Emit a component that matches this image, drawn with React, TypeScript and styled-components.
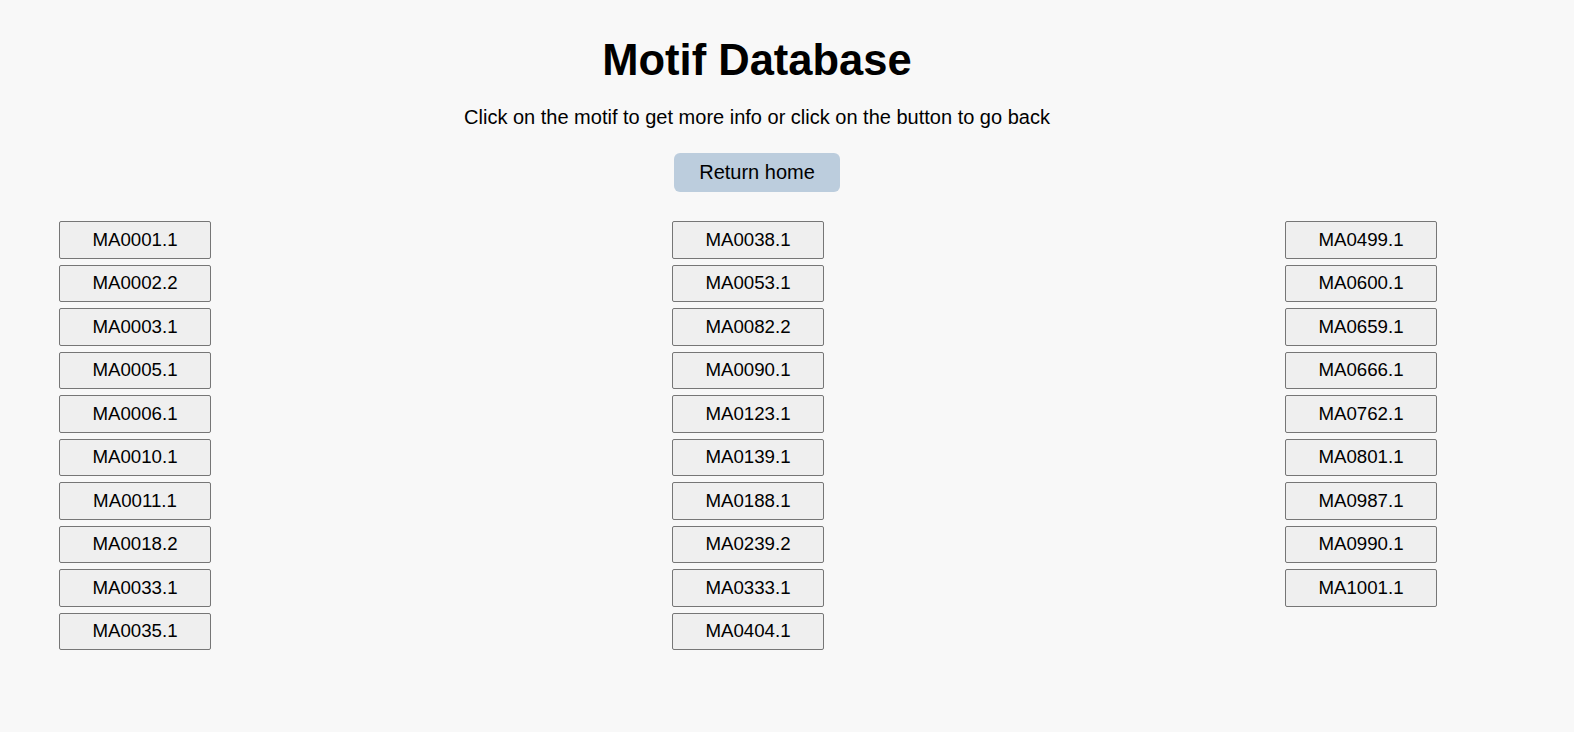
import React from "react";
import styled, { createGlobalStyle } from "styled-components";

const Global = createGlobalStyle`
  html, body { margin: 0; padding: 0; background: #f8f8f8; }
  body { font-family: "Liberation Sans", Arial, sans-serif; color: #000; }
`;

const Page = styled.div`
  display: flex;
  flex-direction: column;
  align-items: center;
  padding: 34px 60px 0 0;
`;

const Title = styled.h1`
  margin: 0;
  font-size: 43.5px;
  font-weight: bold;
  line-height: 52px;
`;

const Subtitle = styled.p`
  margin: 19px 0 0;
  font-size: 20px;
  line-height: 24px;
`;

const HomeButton = styled.button`
  margin-top: 24px;
  width: 166px;
  height: 39px;
  border: none;
  border-radius: 6px;
  background: #bccddd;
  font-family: "Liberation Sans", Arial, sans-serif;
  font-size: 20px;
  color: #000;
  padding: 0;
  cursor: pointer;
`;

const Columns = styled.div`
  align-self: stretch;
  display: grid;
  grid-template-columns: repeat(3, 152px);
  column-gap: 461px;
  padding-left: 59px;
  margin-top: 29px;
  align-items: start;
`;

const Column = styled.div`
  display: flex;
  flex-direction: column;
  gap: 6px;
`;

const MotifButton = styled.button`
  width: 152px;
  height: 37.5px;
  background: #efefef;
  border: 1px solid #767676;
  border-radius: 2px;
  font-family: "Liberation Sans", Arial, sans-serif;
  font-size: 18.7px;
  color: #000;
  padding: 0;
  cursor: pointer;
`;

const columns: string[][] = [
  ["MA0001.1", "MA0002.2", "MA0003.1", "MA0005.1", "MA0006.1", "MA0010.1", "MA0011.1", "MA0018.2", "MA0033.1", "MA0035.1"],
  ["MA0038.1", "MA0053.1", "MA0082.2", "MA0090.1", "MA0123.1", "MA0139.1", "MA0188.1", "MA0239.2", "MA0333.1", "MA0404.1"],
  ["MA0499.1", "MA0600.1", "MA0659.1", "MA0666.1", "MA0762.1", "MA0801.1", "MA0987.1", "MA0990.1", "MA1001.1"],
];

export default function App() {
  return (
    <>
      <Global />
      <Page>
        <Title>Motif Database</Title>
        <Subtitle>Click on the motif to get more info or click on the button to go back</Subtitle>
        <HomeButton>Return home</HomeButton>
        <Columns>
          {columns.map((col, i) => (
            <Column key={i}>
              {col.map((m) => (
                <MotifButton key={m}>{m}</MotifButton>
              ))}
            </Column>
          ))}
        </Columns>
      </Page>
    </>
  );
}
